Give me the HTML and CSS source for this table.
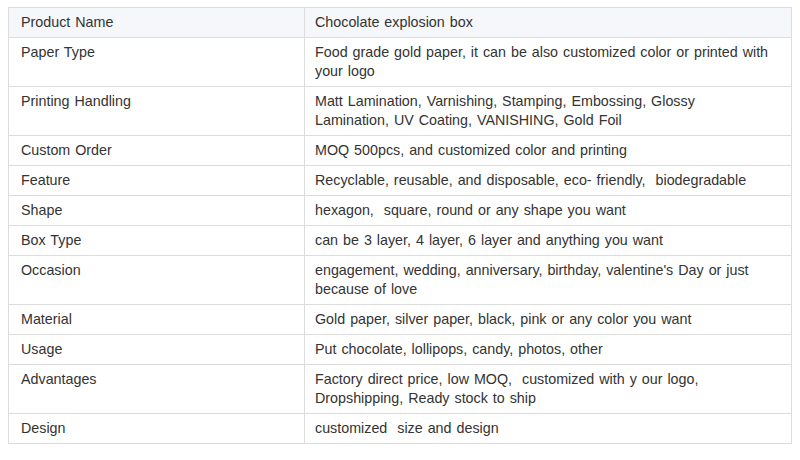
FILE: index.html
```html
<!DOCTYPE html>
<html>
<head>
<meta charset="utf-8">
<link rel="stylesheet" href="styles.css">
</head>
<body>
<table class="spec">
  <colgroup><col class="c1"><col class="c2"></colgroup>
  <tr class="head"><td>Product Name</td><td>Chocolate explosion box</td></tr>
  <tr><td>Paper Type</td><td>Food grade gold paper, it can be also customized color or printed with your logo</td></tr>
  <tr><td>Printing Handling</td><td>Matt Lamination, Varnishing, Stamping, Embossing, Glossy Lamination, UV Coating, VANISHING, Gold Foil</td></tr>
  <tr><td>Custom Order</td><td>MOQ 500pcs, and customized color and printing</td></tr>
  <tr><td>Feature</td><td>Recyclable, reusable, and disposable, eco- friendly,&nbsp; biodegradable</td></tr>
  <tr><td>Shape</td><td>hexagon,&nbsp; square, round or any shape you want</td></tr>
  <tr><td>Box Type</td><td>can be 3 layer, 4 layer, 6 layer and anything you want</td></tr>
  <tr><td>Occasion</td><td>engagement, wedding, anniversary, birthday, valentine's Day or just because of love</td></tr>
  <tr><td>Material</td><td>Gold paper, silver paper, black, pink or any color you want</td></tr>
  <tr><td>Usage</td><td>Put chocolate, lollipops, candy, photos, other</td></tr>
  <tr><td>Advantages</td><td>Factory direct price, low MOQ,&nbsp; customized with y our logo, Dropshipping, Ready stock to ship</td></tr>
  <tr><td>Design</td><td>customized&nbsp; size and design</td></tr>
</table>
</body>
</html>
```
FILE: styles.css
```css
html, body {
  margin: 0;
  padding: 0;
  background: #ffffff;
}
body {
  padding: 7px 8px 0 8px;
  font-family: "Liberation Sans", Arial, sans-serif;
  font-size: 14.3px;
  word-spacing: 1px;
  color: #333333;
}
.spec {
  width: 784px;
  border-collapse: collapse;
  table-layout: fixed;
}
.c1 { width: 296px; }
.spec td {
  border: 1px solid #dcdcdc;
  padding: 5px 11px 5px 12px;
  line-height: 19px;
  vertical-align: top;
  text-align: left;
}
.spec td + td {
  padding-left: 10px;
  padding-right: 18px;
}
.spec tr.head td {
  background: #f5f7fa;
}
```
